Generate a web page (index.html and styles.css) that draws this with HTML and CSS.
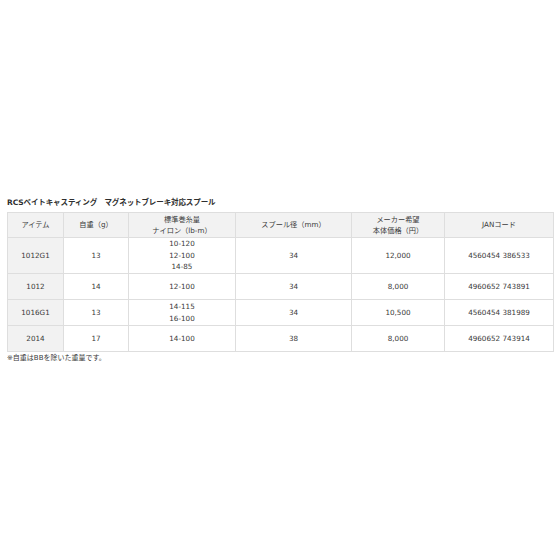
FILE: index.html
```html
<!DOCTYPE html>
<html lang="ja">
<head>
<meta charset="utf-8">
<link rel="stylesheet" href="styles.css">
</head>
<body>
<div class="page">
  <h2 class="title">RCSベイトキャスティング　マグネットブレーキ対応スプール</h2>
  <table class="spec">
    <colgroup>
      <col class="c1"><col class="c2"><col class="c3"><col class="c4"><col class="c5"><col class="c6">
    </colgroup>
    <thead>
      <tr>
        <th>アイテム</th>
        <th>自重（g）</th>
        <th>標準巻糸量<br>ナイロン（lb-m）</th>
        <th>スプール径（mm）</th>
        <th>メーカー希望<br>本体価格（円）</th>
        <th>JANコード</th>
      </tr>
    </thead>
    <tbody>
      <tr class="tall">
        <td class="item">1012G1</td>
        <td>13</td>
        <td>10-120<br>12-100<br>14-85</td>
        <td>34</td>
        <td>12,000</td>
        <td>4560454 386533</td>
      </tr>
      <tr>
        <td class="item">1012</td>
        <td>14</td>
        <td>12-100</td>
        <td>34</td>
        <td>8,000</td>
        <td>4960652 743891</td>
      </tr>
      <tr>
        <td class="item">1016G1</td>
        <td>13</td>
        <td>14-115<br>16-100</td>
        <td>34</td>
        <td>10,500</td>
        <td>4560454 381989</td>
      </tr>
      <tr>
        <td class="item">2014</td>
        <td>17</td>
        <td>14-100</td>
        <td>38</td>
        <td>8,000</td>
        <td>4960652 743914</td>
      </tr>
    </tbody>
  </table>
  <p class="note">※自重はBBを除いた重量です。</p>
</div>
</body>
</html>
```

FILE: styles.css
```css
html, body {
  margin: 0;
  padding: 0;
  background: #ffffff;
}

.page {
  padding: 197px 7px 0 7px;
  font-family: "DejaVu Sans", "Noto Sans CJK JP", sans-serif;
  color: #3a3a3a;
  font-size: 7.2px;
}

.title {
  margin: 0 0 3px 0;
  font-size: 7.5px;
  font-weight: bold;
  line-height: 12px;
  color: #2e2e2e;
  letter-spacing: -0.1px;
}

.spec {
  width: 546px;
  border-collapse: collapse;
  table-layout: fixed;
}

.c1 { width: 56px; }
.c2 { width: 65px; }
.c3 { width: 107px; }
.c4 { width: 116px; }
.c5 { width: 93px; }
.c6 { width: 109px; }

.spec th,
.spec td {
  border: 1px solid #dedede;
  text-align: center;
  vertical-align: middle;
  font-weight: normal;
  line-height: 11.5px;
  padding: 0 2px;
  box-sizing: border-box;
}

.spec th {
  background: #f2f2f2;
  height: 25px;
  font-size: 7.2px;
}

.spec td {
  height: 26px;
}

.spec tr.tall td {
  height: 36px;
}

.spec td.item {
  background: #f2f2f2;
}

.note {
  margin: 1px 0 0 0;
  font-size: 7px;
  line-height: 11px;
  color: #3a3a3a;
}
```
